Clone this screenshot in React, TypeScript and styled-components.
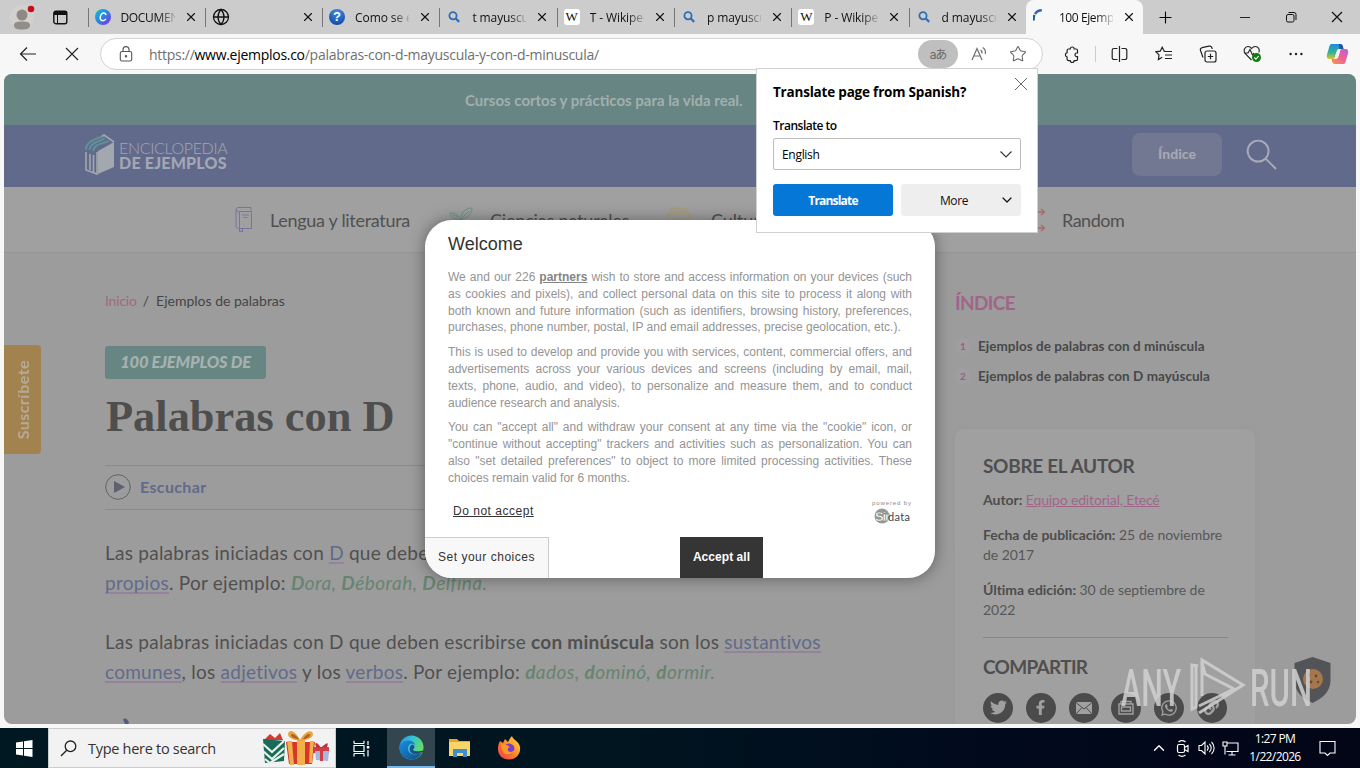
import React from "react";
import styled, { createGlobalStyle, css } from "styled-components";
import { ChevronDown, ChevronUp, Globe, Plus, Search, Star, X } from "lucide-react";
import { FaFacebookF, FaLink, FaTwitter, FaWhatsapp } from "react-icons/fa";

const ui = `"Open Sans", "Noto Sans", sans-serif`;
const site = `Lato, "Open Sans", sans-serif`;
const arial = `"Liberation Sans", Arial, sans-serif`;

const GlobalStyle = createGlobalStyle`
  * {
    box-sizing: border-box;
  }
  body {
    margin: 0;
    overflow: hidden;
  }
  h1, h2, h3, p {
    margin: 0;
  }
  svg {
    display: block;
    flex: none;
  }
`;

const Desktop = styled.div`
  position: relative;
  display: flex;
  flex-direction: column;
  width: 1360px;
  height: 768px;
  overflow: hidden;
  background: #f7f7f7;
  font-family: ${ui};
  white-space: nowrap;
`;

/* ---------- tabs ---------- */

const TabStrip = styled.div`
  display: flex;
  height: 34px;
  background: #cccccc;
`;

const TabTools = styled.div`
  display: flex;
  align-items: center;
  width: 87.5px;
  padding-left: 10px;
  gap: 18px;
`;

const TabBox = styled.div<{ $active?: boolean }>`
  position: relative;
  display: grid;
  grid-template-columns: 16px 54px 10px;
  align-items: center;
  column-gap: 10px;
  width: 117.3px;
  padding-left: 7px;
  font-size: 12px;
  color: #111;

  svg:last-child {
    margin-left: -1px;
  }

  &::before {
    content: "";
    position: absolute;
    left: 0;
    top: 8px;
    width: 1px;
    height: 19px;
    background: #777;
  }

  ${({ $active }) =>
    $active &&
    css`
      background: #f7f7f7;
      border-radius: 8px 8px 0 0;
      &::before {
        display: none;
      }
    `}
`;

const TabTitle = styled.span<{ $spacing?: string }>`
  overflow: hidden;
  letter-spacing: ${({ $spacing }) => $spacing || "-0.1px"};
  mask-image: linear-gradient(to right, #000 70%, transparent 105%);
`;

const WikiIcon = styled.span`
  display: flex;
  align-items: center;
  justify-content: center;
  width: 16px;
  height: 16px;
  border-radius: 3px;
  background: #fff;
  font: 13px "Liberation Serif", serif;
`;

const HelpIcon = styled.span`
  width: 16px;
  height: 16px;
  border-radius: 50%;
  background: radial-gradient(circle at 50% 20%, #3f8be0, #0b3f9f);
  color: #fff;
  font: bold 13px/16px ${arial};
  text-align: center;
`;

const WindowButtons = styled.div`
  display: flex;
  flex: 1;
  align-items: center;
  padding-left: 12.5px;

  svg:nth-child(2) {
    margin-left: 64px;
  }
  svg:nth-child(3) {
    margin-left: 34px;
  }
  svg:nth-child(4) {
    margin-left: 34px;
  }
`;

/* ---------- toolbar ---------- */

const Toolbar = styled.div`
  display: flex;
  align-items: center;
  height: 40px;
  padding-left: 19px;
  color: #1a1a1a;
`;

const NavButtons = styled.div`
  display: flex;
  align-items: center;
  gap: 26px;
  width: 81px;
`;

const AddressBar = styled.div`
  display: flex;
  align-items: center;
  width: 943px;
  height: 32px;
  padding-left: 18px;
  border: 1px solid #d2d2d2;
  border-radius: 16px;
  background: #fff;
  color: #666;
`;

const Url = styled.span`
  flex: 1;
  padding-left: 16px;
  font-size: 14px;
  letter-spacing: -0.28px;
  color: #707070;

  b {
    font-weight: 400;
    color: #000;
  }
`;

const TranslatePill = styled.span`
  display: flex;
  align-items: center;
  justify-content: center;
  width: 40px;
  height: 28px;
  padding-bottom: 2px;
  border-radius: 14px;
  background: #bfbfbf;
  color: #6a6a6a;
  font: 12px Inter, "Noto Sans CJK JP", sans-serif;
  letter-spacing: -1px;
`;

const ReadAloud = styled.span`
  display: flex;
  width: 51px;
  padding-left: 13px;
`;

const ToolIcons = styled.div`
  display: flex;
  align-items: center;
  flex: 1;
  padding-left: 20px;
`;

const Cell = styled.span<{ $w: number }>`
  display: flex;
  align-items: center;
  width: ${({ $w }) => $w}px;
`;

const Divider = styled.span`
  width: 1px;
  height: 16px;
  background: #ccc;
`;

/* ---------- web page ---------- */

const Page = styled.main`
  display: flex;
  flex-direction: column;
  height: 650px;
  margin: 0 4px;
  overflow: hidden;
  border-radius: 8px;
  background: #9c9c9c;
  font-family: ${site};
  color: #505050;
`;

const Promo = styled.div`
  flex: none;
  height: 51px;
  padding-left: 461px;
  background: #678683;
  color: #a2afae;
  font-size: 15px;
  line-height: 52px;
  font-weight: 700;
`;

const SiteHeader = styled.header`
  display: flex;
  flex: none;
  align-items: center;
  height: 62px;
  padding: 0 79px 3px 80px;
  background: #626a8b;
`;

const LogoText = styled.div`
  flex: 1;
  padding-left: 4px;
  color: #a3a7b3;
  font-size: 16px;
  line-height: 15px;
  letter-spacing: -0.35px;
  font-weight: 300;

  b {
    display: block;
    letter-spacing: 0.2px;
    font-weight: 900;
    font-size: 16px;
  }
`;

const IndexButton = styled.span`
  width: 90px;
  height: 43px;
  margin-right: 24px;
  border-radius: 8px;
  background: #737892;
  color: #a5a7b2;
  font-size: 14px;
  font-weight: 900;
  line-height: 42px;
  text-align: center;
`;

const SiteNav = styled.nav`
  display: grid;
  grid-template-columns: 214px 217px 358px 120px;
  align-items: center;
  height: 66px;
  flex: none;
  padding-left: 231px;
  border-bottom: 1px solid #959595;
  background: #a0a0a0;
  font-size: 18px;
`;

const NavItem = styled.span<{ $gap: number; $spacing: string }>`
  display: flex;
  align-items: center;
  gap: ${({ $gap }) => $gap}px;
  letter-spacing: ${({ $spacing }) => $spacing};
`;

const Columns = styled.div`
  display: grid;
  grid-template-columns: 101px 806px 344px;
`;

const SideTab = styled.div`
  display: flex;
  align-items: center;
  justify-content: center;
  width: 37px;
  height: 109px;
  margin-top: 92px;
  border-radius: 0 4px 4px 0;
  background: #a28350;

  span {
    writing-mode: vertical-rl;
    transform: rotate(180deg);
    color: #b6aa96;
    font-size: 16px;
    font-weight: 700;
    letter-spacing: 0.45px;
  }
`;

const Article = styled.article`
  padding-top: 36px;
  margin-right: 44px;
`;

const Breadcrumb = styled.div`
  font-size: 14px;
  line-height: 24px;
  color: #454545;

  a {
    color: #a5687a;
    letter-spacing: -0.2px;
  }
  i {
    margin: 0 7px 0 6px;
    font-style: normal;
  }
`;

const Badge = styled.div`
  width: 161px;
  height: 33px;
  margin-top: 33px;
  border-radius: 3px;
  background: #678683;
  color: #a6b2b0;
  font-size: 16.5px;
  font-weight: 900;
  font-style: italic;
  line-height: 33px;
  text-align: center;
  letter-spacing: -0.2px;
`;

const Title = styled.h1`
  margin: 8px 0 0 1px;
  font: bold 44.4px/58px "Liberation Serif", serif;
  color: #4e4e4e;
`;

const Listen = styled.div`
  display: flex;
  align-items: center;
  gap: 9px;
  height: 45px;
  margin-top: 20px;
  padding-bottom: 2px;
  border-top: 1px solid #8a8a8a;
  border-bottom: 1px solid #8a8a8a;
  color: #626a8b;
  font-size: 16px;
  font-weight: 700;
  letter-spacing: 0.35px;
`;

const Body = styled.p`
  padding-top: 28px;
  font-size: 19px;
  line-height: 30px;
  letter-spacing: 0.25px;

  & + & {
    padding-top: 29px;
  }
  a {
    color: #626a8b;
    background: linear-gradient(#94839a, #94839a) 0 21px / 100% 2px no-repeat;
  }
  em {
    color: #678470;
    letter-spacing: 0.45px;
  }
`;

const PencilTip = styled.svg`
  margin: 31px 0 0 17px;
`;

const Sidebar = styled.aside`
  width: 300px;
  margin-left: 44px;
  padding-top: 38px;
`;

const SideHeading = styled.h2<{ $pink?: boolean; $after: number; $spacing?: string }>`
  margin-bottom: ${({ $after }) => $after}px;
  color: ${({ $pink }) => ($pink ? "#a0668a" : "#4f4f4f")};
  font-size: 19px;
  line-height: 24px;
  letter-spacing: ${({ $spacing }) => $spacing || "0"};
`;

const IndexRow = styled.div`
  display: flex;
  align-items: center;
  height: 30px;
  font-size: 13.5px;
  font-weight: 700;
  letter-spacing: 0.03px;
  color: #484848;

  i {
    width: 16px;
    height: 16px;
    margin-right: 7px;
    border-radius: 50%;
    background: #a09da0;
    color: #98607f;
    font-size: 10px;
    font-style: normal;
    line-height: 16px;
    text-align: center;
  }
`;

const AuthorCard = styled.section`
  height: 320px;
  margin-top: 38px;
  padding: 25px 27px 0 28px;
  border-radius: 8px;
  background: #a0a0a0;
  box-shadow: 0 0 4px #969696;

  p {
    font-size: 14px;
    line-height: 20.5px;
    letter-spacing: -0.04px;
    color: #575757;
  }
  p + p {
    margin-top: 14px;
  }
  p b {
    color: #4d4d4d;
  }
  a {
    color: #a0668a;
    text-decoration: underline;
    letter-spacing: -0.15px;
  }
`;

const Rule = styled.div`
  height: 1px;
  margin: 16px 0 17px;
  background: #878787;
`;

const Shares = styled.div`
  display: flex;
  gap: 12.8px;
`;

const ShareDot = styled.span`
  display: flex;
  flex: none;
  align-items: center;
  justify-content: center;
  width: 30px;
  height: 30px;
  border-radius: 50%;
  background: #4b4b4b;
  color: #a0a0a0;
`;

/* ---------- consent dialog ---------- */

const Consent = styled.div`
  position: absolute;
  left: 425px;
  top: 220px;
  width: 510px;
  height: 358px;
  padding: 14px 23px 0;
  overflow: hidden;
  border-radius: 27px;
  background: #fff;
  font-family: ${arial};
  color: #333;
`;

const ConsentShadow = styled.div`
  position: absolute;
  left: 425px;
  top: 220px;
  width: 510px;
  height: 358px;
  border-radius: 27px;
  box-shadow: 0 0 16px rgba(0, 0, 0, 0.4);
`;

const ConsentTitle = styled.h2`
  font-size: 18px;
  font-weight: 400;
  line-height: 20px;
`;

const ConsentText = styled.div`
  padding-top: 15px;
  font-size: 12px;
  line-height: 16.8px;
  color: #949494;

  p + p {
    margin-top: 8px;
  }
`;

const Line = styled.span<{ $last?: boolean }>`
  display: block;
  height: 16.8px;
  text-align: justify;
  text-align-last: ${({ $last }) => ($last ? "left" : "justify")};

  u {
    font-weight: 700;
    color: #858585;
  }
`;

const ConsentRow = styled.div`
  display: flex;
  justify-content: space-between;
  height: 50.4px;
  padding: 14px 0 0 5px;
  font-size: 12px;
  line-height: 20px;
  letter-spacing: 0.52px;
`;

const ConsentActions = styled.div`
  display: grid;
  grid-template-columns: 124px 131px 83px;
  height: 42px;
  margin: 0 -23px;
`;

const SetChoices = styled.button`
  padding: 0 0 2px;
  border: 1px solid #ccc;
  border-left: 0;
  background: #f8f8f8;
  color: #333;
  font: 12px ${arial};
  letter-spacing: 0.52px;
`;

const AcceptAll = styled.button`
  grid-column: 3;
  padding: 0 0 1px;
  border: 0;
  background: #353535;
  color: #fff;
  font: bold 12px ${arial};
  letter-spacing: 0.05px;
`;

/* ---------- translate popup ---------- */

const Popup = styled.div`
  position: absolute;
  left: 756px;
  top: 68px;
  width: 282px;
  height: 165px;
  padding: 14px 16px;
  border: 1px solid #d0d0d0;
  background: #fff;
  color: #000;
  font-size: 12px;
`;

const PopupTitle = styled.div`
  display: flex;
  height: 33px;
  font-size: 13.5px;
  font-weight: 700;
  line-height: 18px;
  letter-spacing: -0.2px;

  svg {
    margin: -6px -7px 0 auto;
  }
`;

const PopupLabel = styled.div`
  height: 22px;
  line-height: 19px;
  font-weight: 600;
  letter-spacing: -0.5px;
`;

const Select = styled.div`
  display: flex;
  align-items: center;
  justify-content: space-between;
  height: 32px;
  padding: 0 6px 0 8px;
  border: 1px solid #bdbdbd;
  border-radius: 2px;
  letter-spacing: -0.3px;
`;

const PopupButtons = styled.div`
  display: grid;
  grid-template-columns: 120px 120px;
  gap: 8px;
  margin-top: 14px;
`;

const PopupButton = styled.div<{ $primary?: boolean }>`
  display: grid;
  grid-template-columns: 1fr auto;
  align-items: center;
  height: 32px;
  padding: ${({ $primary }) => ($primary ? "0" : "0 6px 0 8px")};
  border-radius: 3px;
  background: ${({ $primary }) => ($primary ? "#0577d6" : "#eeeeee")};
  color: ${({ $primary }) => ($primary ? "#fff" : "#111")};
  font-weight: ${({ $primary }) => ($primary ? 700 : 400)};
  text-align: center;
  letter-spacing: ${({ $primary }) => ($primary ? "-0.8px" : "-0.4px")};
`;

/* ---------- overlays ---------- */

const Shield = styled.svg`
  position: absolute;
  left: 1293px;
  top: 656px;
`;

const Watermark = styled.svg`
  position: absolute;
  left: 1115px;
  top: 652px;
`;

/* ---------- taskbar ---------- */

const Taskbar = styled.footer`
  display: flex;
  height: 40px;
  margin-top: 4px;
  background: linear-gradient(to right, #001821, #001520 45%, #01091c 75%, #020617);
  color: #fff;
`;

const TaskCell = styled.div<{ $w: number; $active?: boolean }>`
  display: flex;
  align-items: center;
  justify-content: center;
  width: ${({ $w }) => $w}px;
  ${({ $active }) =>
    $active &&
    css`
      background: #33464f;
      border-bottom: 2px solid #76b9ed;
    `}
`;

const SearchBox = styled.div`
  display: flex;
  align-items: center;
  width: 288px;
  height: 40px;
  padding: 0 3px 0 11px;
  border: 1px solid #ccc;
  background: #f2f2f2;
  color: #333;
  font-size: 14.5px;
  letter-spacing: -0.29px;

  span {
    flex: 1;
    padding-left: 11px;
  }
`;

const Tray = styled.div`
  display: flex;
  align-items: center;
  margin-left: auto;
`;

const Clock = styled.div`
  width: 58px;
  margin-right: 15px;
  font-size: 12px;
  line-height: 18px;
  text-align: center;
  letter-spacing: -0.62px;
`;

const tabs = [
  { title: "DOCUMENTO", icon: "canva", spacing: "-0.35px" },
  { title: "", icon: "globe" },
  { title: "Como se escribe", icon: "help" },
  { title: "t mayuscula", icon: "search" },
  { title: "T - Wikipedia", icon: "wiki" },
  { title: "p mayuscula", icon: "search" },
  { title: "P - Wikipedia", icon: "wiki" },
  { title: "d mayuscula", icon: "search" },
  { title: "100 Ejemplos", icon: "loading", spacing: "-0.4px", active: true },
];

const Favicon = ({ kind }: { kind: string }) => {
  switch (kind) {
    case "canva":
      return (
        <svg width="16" height="16" viewBox="0 0 16 16">
          <defs>
            <linearGradient id="canva" x1="0" y1="0" x2="1" y2="1">
              <stop offset="0" stopColor="#08c6cf" />
              <stop offset=".5" stopColor="#2e83df" />
              <stop offset="1" stopColor="#8a25e6" />
            </linearGradient>
          </defs>
          <circle cx="8" cy="8" r="8" fill="url(#canva)" />
          <path d="M11 6.2C10.8 4.4 9.4 3.8 8.2 4.1 6 4.7 4.9 7.5 5.3 9.7 5.9 12.5 9.2 12.3 11 9.9" fill="none" stroke="#fff" strokeWidth="1.5" />
        </svg>
      );
    case "globe":
      return <Globe size={18} strokeWidth={1.7} />;
    case "help":
      return <HelpIcon>?</HelpIcon>;
    case "wiki":
      return <WikiIcon>W</WikiIcon>;
    case "loading":
      return (
        <svg width="16" height="16" viewBox="0 0 16 16">
          <path d="M.8 11.5A8 8 0 0 1 1.5 6" fill="none" stroke="#12608a" strokeWidth="2.4" />
          <path d="M2 5A8 8 0 0 1 8.8 1.2" fill="none" stroke="#2c66b2" strokeWidth="2.4" />
        </svg>
      );
    default:
      return (
        <svg width="16" height="16" viewBox="0 0 16 16" fill="none" stroke="#2d6fb5">
          <circle cx="7" cy="6.7" r="3.6" strokeWidth="1.8" />
          <path d="M9.8 9.5L13.2 12.9" strokeWidth="2.2" />
        </svg>
      );
  }
};

const BrowserChrome = () => (
  <>
    <TabStrip>
      <TabTools>
        <svg width="25" height="26" viewBox="0 0 25 26">
          <circle cx="12" cy="13" r="12" fill="#d3d0cd" />
          <circle cx="12" cy="11" r="5.5" fill="#8e8985" />
          <path d="M4 21c0-3 4-3.500 8-3.500s8 .5 8 3.500c0 4-4 4.500-8 4.500s-8-.5-8-4.500z" fill="#918d89" />
          <circle cx="21" cy="5" r="3.3" fill="#c50f1f" />
        </svg>
        <svg width="15" height="15" viewBox="0 0 15 15">
          <rect x=".8" y="1.3" width="13" height="12.4" rx="2" fill="none" stroke="#111" strokeWidth="1.4" />
          <path d="M1 1.500h13v3.500H1z" fill="#111" />
          <path d="M4.500 4v9.500" stroke="#111" />
        </svg>
      </TabTools>
      {tabs.map((tab, i) => (
        <TabBox key={i} $active={tab.active}>
          <Favicon kind={tab.icon} />
          <TabTitle $spacing={tab.spacing}>{tab.title}</TabTitle>
          <X size={14} strokeWidth={1.9} />
        </TabBox>
      ))}
      <WindowButtons>
        <Plus size={19} strokeWidth={1.4} />
        <svg width="12" height="12" viewBox="0 0 12 12">
          <path d="M1 6.500h10" stroke="#222" />
        </svg>
        <svg width="12" height="12" viewBox="0 0 12 12" fill="none" stroke="#111">
          <rect x="1.5" y="3.5" width="7.5" height="7.5" rx="1.5" />
          <path d="M3.500 1.500h5.500a2 2 0 0 1 2 2V9" />
        </svg>
        <svg width="12" height="12" viewBox="0 0 12 12" stroke="#111" strokeWidth="1.2">
          <path d="M1 1l10 10M11 1L1 11" />
        </svg>
      </WindowButtons>
    </TabStrip>
    <Toolbar>
      <NavButtons>
        <svg width="18" height="16" viewBox="0 0 18 16" fill="none" stroke="#222" strokeWidth="1.2">
          <path d="M17 8H1.500M8 1.500L1.500 8L8 14.500" />
        </svg>
        <svg width="18" height="14" viewBox="0 0 18 14" stroke="#222" strokeWidth="1.1">
          <path d="M3 1l12 12M15 1L3 13" />
        </svg>
      </NavButtons>
      <AddressBar>
        <svg width="14" height="16" viewBox="0 0 14 16" fill="none" stroke="#555" strokeWidth="1.1">
          <rect x="1.3" y="5.5" width="11.4" height="9.5" rx="1.8" />
          <path d="M4 5.500V3.600a3 3 0 0 1 6 0v1.900" />
          <circle cx="7" cy="10.2" r=".7" fill="#555" />
        </svg>
        <Url>
          https://<b>www.ejemplos.co</b>/palabras-con-d-mayuscula-y-con-d-minuscula/
        </Url>
        <TranslatePill>aあ</TranslatePill>
        <ReadAloud>
          <svg width="17" height="16" viewBox="0 0 17 16" fill="none" stroke="#707070" strokeWidth="1.2">
            <path d="M1 14L6 2.500L11 14M2.800 10h6.500M9.500 4a3 3 0 0 1 1.300 3.500M11.800 1.500a6 6 0 0 1 2.400 6.500" />
          </svg>
        </ReadAloud>
        <Cell $w={33}>
          <Star size={18} strokeWidth={1.4} />
        </Cell>
      </AddressBar>
      <ToolIcons>
        <Cell $w={32}>
          <svg width="17" height="17" viewBox="0 0 17 17" fill="none" stroke="#222" strokeWidth="1.2">
            <path d="M5.500 3h1.700a2 2 0 0 1 4 0h1.900a1.400 1.400 0 0 1 1.400 1.400v2.600h-.7a1.800 1.800 0 0 0 0 3.600h.7v2.600a1.400 1.400 0 0 1-1.400 1.400h-1.900a2 2 0 0 1-4 0H5.500a1.400 1.400 0 0 1-1.400-1.400v-2.200a2.200 2.200 0 0 1 0-4.300V4.400A1.400 1.400 0 0 1 5.500 3z" />
          </svg>
        </Cell>
        <Cell $w={16}>
          <Divider />
        </Cell>
        <Cell $w={44}>
          <svg width="17" height="16" viewBox="0 0 17 16" fill="none" stroke="#222" strokeWidth="1.2">
            <path d="M6.500 2.500H3A1.800 1.800 0 0 0 1.200 4.300v7.400A1.800 1.800 0 0 0 3 13.500h3.500M10.500 2.500H14a1.800 1.800 0 0 1 1.800 1.800v7.400a1.800 1.800 0 0 1-1.800 1.800h-3.500M8.500 0v16" />
          </svg>
        </Cell>
        <Cell $w={44}>
          <svg width="18" height="16" viewBox="0 0 18 16" fill="none" stroke="#222" strokeWidth="1.2">
            <path d="M10.500 5.500L9.200 5.200L7.200 1.200L5.200 5.200L1 5.800L4 8.900L3.400 13.500L7.200 11.300M10 5.500h7M10 9h7M10 12.500h7" />
          </svg>
        </Cell>
        <Cell $w={44}>
          <svg width="18" height="18" viewBox="0 0 18 18" fill="none" stroke="#222" strokeWidth="1.2">
            <rect x="6" y="6" width="11" height="11" rx="2" />
            <path d="M11.500 8.800v5.400M8.800 11.500h5.400M4 12.500L1.500 5.500C1 4 1.500 3.200 3 2.700L10 1.200C12 .8 12.800 2 13.200 4" />
          </svg>
        </Cell>
        <Cell $w={46}>
          <svg width="19" height="18" viewBox="0 0 19 18" fill="none" stroke="#222" strokeWidth="1.1">
            <path d="M8.500 15L2.500 9C-.5 5.500 2 1.500 5 1.500c1.700 0 2.800.8 3.600 2C9.500 2.300 10.500 1.500 12.200 1.500c3.500 0 4.800 3.200 3.600 6M1 8h4l2-3.500 2.500 5.500 1.500-2" />
            <circle cx="13.5" cy="12.5" r="4.5" fill="#107c10" stroke="none" />
            <path d="M11.300 12.500l1.600 1.600 2.700-2.900" stroke="#fff" />
          </svg>
        </Cell>
        <Cell $w={37}>
          <svg width="14" height="4" viewBox="0 0 14 4" fill="#222">
            <circle cx="1.6" cy="2" r="1.2" />
            <circle cx="7" cy="2" r="1.2" />
            <circle cx="12.4" cy="2" r="1.2" />
          </svg>
        </Cell>
        <svg width="23" height="22" viewBox="0 0 23 22">
          <defs>
            <linearGradient id="cpA" x1="0" y1="0" x2="0" y2="1">
              <stop offset="0" stopColor="#1a8be0" />
              <stop offset=".6" stopColor="#38b68e" />
              <stop offset="1" stopColor="#e8c424" />
            </linearGradient>
            <linearGradient id="cpB" x1="1" y1="0" x2="0" y2="1">
              <stop offset="0" stopColor="#b164dc" />
              <stop offset=".5" stopColor="#ef6393" />
              <stop offset="1" stopColor="#f79a45" />
            </linearGradient>
          </defs>
          <path d="M6 1h8c2 0 2.500 1 3 3l.5 2h-4c-2 0-2.500 1-3 3l-1.500 5c-.5 1.500-1 2-2.500 2H3.500C1 16 .3 14 1 11.500L3.500 3C4 1.500 4.500 1 6 1z" fill="url(#cpA)" />
          <path d="M17 21H9c-2 0-2.500-1-3-3l-.5-2h4c2 0 2.500-1 3-3L14 8c.5-1.500 1-2 2.500-2h3c2.500 0 3.200 2 2.500 4.500L19.500 19c-.5 1.500-1 2-2.500 2z" fill="url(#cpB)" />
          <path d="M13 1h1c2 0 2.500 1 3 3l.5 2h-4z" fill="#2351a8" />
          <path d="M10.500 9h3.200l-1.200 4.300h-3.300z" fill="#f7f7f7" />
        </svg>
      </ToolIcons>
    </Toolbar>
  </>
);

const WebPage = () => (
  <Page>
    <Promo>Cursos cortos y prácticos para la vida real.</Promo>
    <SiteHeader>
      <svg width="31" height="43" viewBox="0 0 31 43">
        <path d="M14 18L30 9v25L14 41z" fill="#a3a7ae" />
        <path d="M2 19v18l11 4V19M6 21v16M9.500 22v17M30 9L20 2L17 4" fill="none" stroke="#a3a7ae" strokeWidth="1.6" />
        <path d="M2 17C2 9 9 7 18 3.500M5.500 17C6 11 12 9 21 5.500M9 18C10 12 16 11 25 8" fill="none" stroke="#5f9198" strokeWidth="2" />
      </svg>
      <LogoText>
        ENCICLOPEDIA
        <b>DE EJEMPLOS</b>
      </LogoText>
      <IndexButton>Índice</IndexButton>
      <svg width="31" height="31" viewBox="0 0 32 32" fill="none" stroke="#a8abb9" strokeWidth="2">
        <circle cx="12.5" cy="12.5" r="10.8" />
        <path d="M20.500 20.500L31 31" />
      </svg>
    </SiteHeader>
    <SiteNav>
      <NavItem $gap={16} $spacing="-0.3px">
        <svg width="19" height="26" viewBox="0 0 19 26" fill="none" stroke="#7972a3">
          <path d="M4.500 4.500h12v17h-12c-4 0-4-2-3.500-3.500V3c0-2 1.500-2.500 3-2.500h12v3M4.500 4.500c-2 0-3.500-.5-3.500-2M4.500 5v16M7 8h7M8.500 10.500h4M4.500 21v4l1.500-1 1.500 1v-4" />
        </svg>
        Lengua y literatura
      </NavItem>
      <NavItem $gap={17} $spacing="-0.18px">
        <svg width="24" height="26" viewBox="0 0 24 26" fill="none" stroke="#6c938b">
          <path d="M12 25V12C12 5 17 1 23 1c0 6-4 10-11 11M12 12C9 8 5 5.500 1 6c1 5 5 7 11 6M14 10l6-6M9 10L4 8M12 17c-4-2-7-2-9 0 3 3 6 3 9 2" />
        </svg>
        Ciencias naturales
      </NavItem>
      <NavItem $gap={19} $spacing="-0.1px">
        <svg width="26" height="26" viewBox="0 0 26 26" fill="none" stroke="#aa9c72">
          <path d="M4 4c4-4 14-4 18 0M5 2h16v3H5zM1 8h24M3 8v11h20V8M7 12h12M5 22h16M1 10l3-5M25 10l-3-5" />
        </svg>
        Cultura
      </NavItem>
      <NavItem $gap={16} $spacing="-0.5px">
        <svg width="22" height="26" viewBox="0 0 22 26" fill="none" stroke="#a8695d" strokeWidth="1.3">
          <path d="M0 5h5l9 16h6M0 21h5l9-16h6M17 2l3.500 3L17 8M17 18l3.500 3-3.500 3" />
        </svg>
        Random
      </NavItem>
    </SiteNav>
    <Columns>
      <SideTab>
        <span>Suscríbete</span>
      </SideTab>
      <Article>
        <Breadcrumb>
          <a>Inicio</a>
          <i>/</i>Ejemplos de palabras
        </Breadcrumb>
        <Badge>100 EJEMPLOS DE</Badge>
        <Title>Palabras con D</Title>
        <Listen>
          <svg width="26" height="26" viewBox="0 0 26 26">
            <circle cx="13" cy="13" r="12.3" fill="none" stroke="#626262" />
            <path d="M9 7l11 6-11 6z" fill="#5e6070" />
          </svg>
          Escuchar
        </Listen>
        <Body>
          Las palabras iniciadas con <a>D</a> que deben escribirse con mayúscula son los <a>nombres</a>
          <br />
          <a>propios</a>. Por ejemplo:{" "}
          <em>
            <b>D</b>ora, <b>D</b>éborah, <b>D</b>elfina.
          </em>
        </Body>
        <Body>
          Las palabras iniciadas con D que deben escribirse <b>con minúscula</b> son los <a>sustantivos</a>
          <br />
          <a>comunes</a>, los <a>adjetivos</a> y los <a>verbos</a>. Por ejemplo:{" "}
          <em>
            <b>d</b>ados, <b>d</b>ominó, <b>d</b>ormir.
          </em>
        </Body>
        <PencilTip width="8" height="8" viewBox="0 0 8 8">
          <path d="M1 1.500C3-.5 6 1 7 5L4 8z" fill="#555b86" />
        </PencilTip>
      </Article>
      <Sidebar>
        <SideHeading $pink $after={16} $spacing="-0.65px">
          ÍNDICE
        </SideHeading>
        <IndexRow>
          <i>1</i>Ejemplos de palabras con d minúscula
        </IndexRow>
        <IndexRow>
          <i>2</i>Ejemplos de palabras con D mayúscula
        </IndexRow>
        <AuthorCard>
          <SideHeading $after={12} $spacing="-0.3px">
            SOBRE EL AUTOR
          </SideHeading>
          <p>
            <b>Autor:</b> <a>Equipo editorial, Etecé</a>
          </p>
          <p>
            <b>Fecha de publicación:</b> 25 de noviembre
            <br />
            de 2017
          </p>
          <p>
            <b>Última edición:</b> 30 de septiembre de
            <br />
            2022
          </p>
          <Rule />
          <SideHeading $after={14} $spacing="-0.7px">
            COMPARTIR
          </SideHeading>
          <Shares>
            <ShareDot>
              <FaTwitter size={17} />
            </ShareDot>
            <ShareDot>
              <FaFacebookF size={15} />
            </ShareDot>
            <ShareDot>
              <svg width="18" height="14" viewBox="0 0 18 14">
                <rect x="1" y="1" width="16" height="12" rx="1.5" fill="#a0a0a0" />
                <path d="M1.500 2L9 8l7.500-6M1.500 12.500L6.500 7M16.500 12.500L11.500 7" fill="none" stroke="#4b4b4b" />
              </svg>
            </ShareDot>
            <ShareDot>
              <svg width="16" height="16" viewBox="0 0 16 16" fill="none" stroke="#a0a0a0" strokeWidth="1.4">
                <path d="M1 4h14v10H1zM3 4V1.500h10V4M3.500 7h9v4h-9z" />
              </svg>
            </ShareDot>
            <ShareDot>
              <FaWhatsapp size={18} />
            </ShareDot>
            <ShareDot>
              <FaLink size={15} />
            </ShareDot>
          </Shares>
        </AuthorCard>
      </Sidebar>
    </Columns>
  </Page>
);

const consentText = [
  [
    <>We and our 226 <u>partners</u> wish to store and access information on your devices (such</>,
    "as cookies and pixels), and collect personal data on this site to process it along with",
    "both known and future information (such as identifiers, browsing history, preferences,",
    "purchases, phone number, postal, IP and email addresses, precise geolocation, etc.).",
  ],
  [
    "This is used to develop and provide you with services, content, commercial offers, and",
    "advertisements across your various devices and screens (including by email, mail,",
    "texts, phone, audio, and video), to personalize and measure them, and to conduct",
    "audience research and analysis.",
  ],
  [
    'You can "accept all" and withdraw your consent at any time via the "cookie" icon, or',
    '"continue without accepting" trackers and activities such as personalization. You can',
    'also "set detailed preferences" to object to more limited processing activities. These',
    "choices remain valid for 6 months.",
  ],
];

const ConsentDialog = () => (
  <>
    <ConsentShadow />
    <Consent>
      <ConsentTitle>Welcome</ConsentTitle>
      <ConsentText>
        {consentText.map((lines, i) => (
          <p key={i}>
            {lines.map((line, j) => (
              <Line key={j} $last={j === 3}>
                {line}
              </Line>
            ))}
          </p>
        ))}
      </ConsentText>
      <ConsentRow>
        <u>Do not accept</u>
        <svg width="41" height="28" viewBox="0 0 41 28" fontFamily="Liberation Sans" letterSpacing="0">
          <text x="1" y="3.500" fontSize="6" fill="#888" textLength="39">powered by</text>
          <circle cx="11" cy="15" r="7.5" fill="#999" />
          <text x="4" y="20" fontSize="13" fontWeight="bold" fill="#fff" stroke="#777" strokeWidth=".4" textLength="15">Sir</text>
          <text x="17" y="19.500" fontSize="11" fill="#444" fontFamily="Lato" textLength="22">data</text>
        </svg>
      </ConsentRow>
      <ConsentActions>
        <SetChoices>Set your choices</SetChoices>
        <AcceptAll>Accept all</AcceptAll>
      </ConsentActions>
    </Consent>
  </>
);

const TranslatePopup = () => (
  <Popup>
    <PopupTitle>
      Translate page from Spanish?
      <svg width="14" height="14" viewBox="0 0 14 14" stroke="#666">
        <path d="M1 1l12 12M13 1L1 13" />
      </svg>
    </PopupTitle>
    <PopupLabel>Translate to</PopupLabel>
    <Select>
      English
      <svg width="16" height="16" viewBox="0 0 16 16" fill="none" stroke="#333" strokeWidth="1.1">
        <path d="M2.500 5.500L8 11l5.500-5.500" />
      </svg>
    </Select>
    <PopupButtons>
      <PopupButton $primary>Translate</PopupButton>
      <PopupButton>
        More
        <ChevronDown size={16} strokeWidth={1.8} />
      </PopupButton>
    </PopupButtons>
  </Popup>
);

const Gifts = () => (
  <svg width="70" height="36" viewBox="0 0 70 36">
    <path d="M2 10l6-6 5 4 5-5 3 7z" fill="#d13b32" />
    <path d="M1 9l22 2-1 20-19 2z" fill="#176b58" />
    <path d="M1 14l9 8 12-11M1 21l9 8 12-11M3 29l5 4 14-9" fill="none" stroke="#e9f0e8" strokeWidth="2.2" />
    <path d="M24 12h29l-3 22H27z" fill="#d9352a" />
    <path d="M35 10h8v25h-8zM25 11h5l2 24h-4zM48 11h4l-2 22h-3z" fill="#f1b04b" />
    <path d="M38 10C33 0 27-1 26 4c0 4 6 6 12 7 7-1 13-3 13-7C50-1 43 1 38 10z" fill="#eaa23b" />
    <path d="M37 9c-4-5-8-6-8-4 0 2 4 4 8 4zM41 9c3-5 7-6 7-4 0 2-4 4-7 4z" fill="#a8642a" />
    <path d="M51 17h16v6H51z" fill="#cf3d46" />
    <path d="M53 21h14l-1 10-12-1z" fill="#a8b7e0" />
    <path d="M58 17h3v14h-3z" fill="#cf3d46" />
    <path d="M59 18c-4-7-7-6-5-1l5 1c6-6 8-6 6-1z" fill="#c22e3c" />
  </svg>
);

const WindowsTaskbar = () => (
  <Taskbar>
    <TaskCell $w={48}>
      <svg width="17" height="17" viewBox="0 0 17 17" fill="#fff">
        <path d="M0 2.500l7-1v6.500H0zM8 1.300L16.500 0v8H8zM0 9h7v6.500l-7-1zM8 9h8.500v8L8 15.700z" />
      </svg>
    </TaskCell>
    <SearchBox>
      <svg width="17" height="17" viewBox="0 0 17 17" fill="none" stroke="#222" strokeWidth="1.3">
        <circle cx="10.5" cy="6.3" r="5.3" />
        <path d="M6.700 10.200L1 16" />
      </svg>
      <span>Type here to search</span>
      <Gifts />
    </SearchBox>
    <TaskCell $w={51}>
      <svg width="17" height="17" viewBox="0 0 17 17" fill="none" stroke="#fff" strokeWidth="1.2">
        <path d="M1 3.500V.8M11 3.500V.8M1 3.500h10M1 5.500h10v6H1zM1 13.500h10M1 13.500v3M11 13.500v3M15 1v4M15 10v6.500" />
        <path d="M13.800 6h2.500v2.500h-2.500z" fill="#fff" stroke="none" />
      </svg>
    </TaskCell>
    <TaskCell $w={48} $active>
      <svg width="25" height="25" viewBox="0 0 25 25">
        <defs>
          <linearGradient id="edgeTop" x1="0" y1="0" x2="1" y2=".4">
            <stop offset="0" stopColor="#2490dc" />
            <stop offset=".5" stopColor="#35c1d8" />
            <stop offset="1" stopColor="#66dd60" />
          </linearGradient>
          <linearGradient id="edgeLow" x1="0" y1="0" x2="1" y2="1">
            <stop offset="0" stopColor="#1b8fe0" />
            <stop offset="1" stopColor="#114a8b" />
          </linearGradient>
        </defs>
        <circle cx="12.5" cy="12.5" r="12" fill="url(#edgeTop)" />
        <path d="M.5 12C1 7.500 5 5.500 9.500 5.500c4 0 6.500 2.500 6.500 5 0-.5-1.500-2-3.500-2-5 1-5.500 10 2.500 11 3.500.3 6-1 8-2.500-2 5-6.500 7.800-11 7.500C5 24 0 18.500.5 12z" fill="url(#edgeLow)" />
        <path d="M14 14.500c2-1.500 2-4-.5-5-4 1-4.500 9 2.500 10 3.500 0 5.500-1.500 7.500-4-3 1.500-9 1.500-9.500-1z" fill="#195293" />
        <path d="M14 14.500c.5 2.500 6.500 2.500 9.500 1l1.500 0-1 1.500c-4 1-9 1-10-2.500z" fill="#33464f" />
      </svg>
    </TaskCell>
    <TaskCell $w={49}>
      <svg width="23" height="20" viewBox="0 0 23 20">
        <path d="M1 1h8l2 2h11v5H1z" fill="#e6a52e" />
        <path d="M1 4h21v14H1z" fill="#f8d564" />
        <path d="M5 11h14v8h-4v-4H9v4H5z" fill="#3d8fce" />
      </svg>
    </TaskCell>
    <TaskCell $w={49}>
      <svg width="24" height="24" viewBox="0 0 24 24">
        <defs>
          <linearGradient id="fox" x1="1" y1="0" x2="0" y2="1">
            <stop offset="0" stopColor="#ffe14a" />
            <stop offset=".5" stopColor="#ff8a24" />
            <stop offset="1" stopColor="#f12d52" />
          </linearGradient>
        </defs>
        <path d="M3 5l3 2 2-4 3 3c1-2 2-4 4-6 1 4 7 5 8 11 1 7-4 12.500-11 12.500S.5 19 1 12C1 9 2 7 3 5z" fill="url(#fox)" />
        <circle cx="12" cy="13" r="5.5" fill="#7a3ec8" />
        <path d="M4 9c4-2 6 0 9 2-3 1-3 4 0 5 2 0 4-1 5-3 0 6-11 8-13 1z" fill="#ff9826" />
      </svg>
    </TaskCell>
    <Tray>
      <Cell $w={26}>
        <ChevronUp size={18} strokeWidth={1.8} />
      </Cell>
      <Cell $w={22}>
        <svg width="14" height="17" viewBox="0 0 14 17" fill="none" stroke="#fff" strokeWidth="1.2">
          <rect x="1.5" y="4.5" width="7" height="8" rx="1.5" />
          <path d="M8.500 7.500L12 5.500v6L8.500 9.500M2.500 2c2-1.500 5-1.500 7 0M2.500 15c2 1.500 5 1.500 7 0" />
        </svg>
      </Cell>
      <Cell $w={24}>
        <svg width="17" height="16" viewBox="0 0 17 16" fill="none" stroke="#fff" strokeWidth="1.1">
          <path d="M1 5.500h2.500L7 2v12l-3.500-3.500H1zM9 5.500c1.500 1.500 1.500 3.500 0 5M11.300 3.800c2.500 2.500 2.500 6 0 8.400M13.500 2c3.500 3.500 3.500 8.500 0 12" />
        </svg>
      </Cell>
      <Cell $w={24}>
        <svg width="17" height="15" viewBox="0 0 17 15" fill="none" stroke="#fff" strokeWidth="1.1">
          <path d="M5 2h11v8.500H4.500M10 10.500v3.500M6.500 14h7M1 1h4v4H1zM3 5v8.500" />
        </svg>
      </Cell>
      <Clock>
        1:27 PM
        <br />
        1/22/2026
      </Clock>
      <Cell $w={41}>
        <svg width="17" height="17" viewBox="0 0 17 17" fill="none" stroke="#fff" strokeWidth="1.1">
          <path d="M1 1.500h15v11.500h-5L8.500 15.500L6 13H1z" />
        </svg>
      </Cell>
    </Tray>
  </Taskbar>
);

const App = () => {
  return (
    <Desktop>
      <GlobalStyle />
      <BrowserChrome />
      <WebPage />
      <WindowsTaskbar />
      <ConsentDialog />
      <TranslatePopup />
      <Shield width="39" height="48" viewBox="0 0 39 48">
        <path d="M19.500 1l18 6v17c0 12-8 18-18 23C9.500 42 1.500 36 1.500 24V7z" fill="#525457" />
        <circle cx="20" cy="23" r="10" fill="#a4774f" />
        <g fill="#65493a">
          <circle cx="16" cy="19" r="1.4" />
          <circle cx="23" cy="20" r="1.4" />
          <circle cx="18" cy="26" r="1.4" />
          <circle cx="25" cy="26" r="1.2" />
        </g>
      </Shield>
      <Watermark width="204" height="72" viewBox="0 0 204 72" fontFamily="Roboto" fontWeight="500" fontSize="51" fill="#d2d2d2" opacity=".85">
        <text x="6" y="54" textLength="60" lengthAdjust="spacingAndGlyphs">ANY</text>
        <text x="135" y="54" textLength="62" lengthAdjust="spacingAndGlyphs">RUN</text>
        <g fill="none" stroke="#d2d2d2" strokeWidth="3">
          <path d="M83 14l-6-1v44l4-2V15" />
          <path d="M87 44V8L128 33L84 61M87 10L90 22L119 37L84 54" />
        </g>
      </Watermark>
    </Desktop>
  );
};

export default App;
